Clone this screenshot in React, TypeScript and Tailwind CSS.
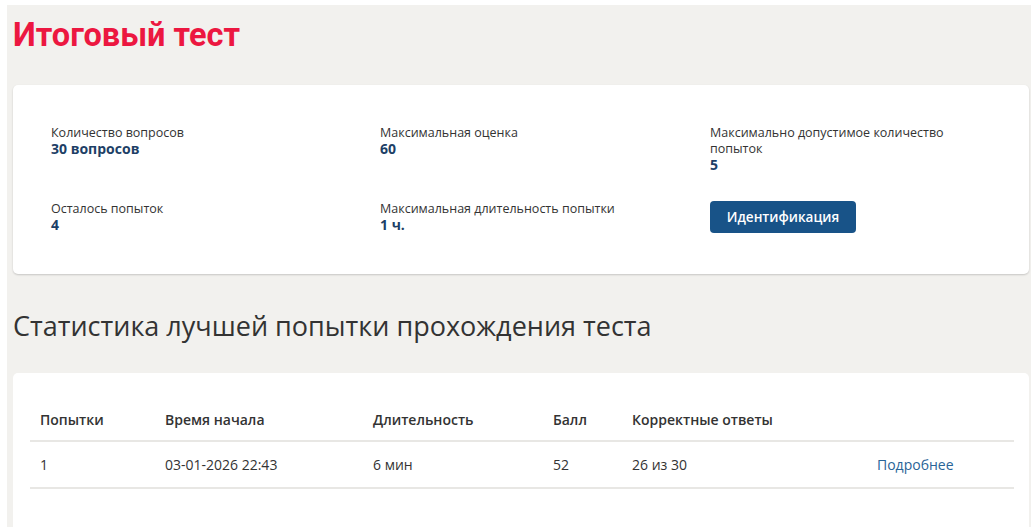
const sans = "font-['Segoe_UI','Open_Sans','Noto_Sans',sans-serif]";

type Info = { label: string; value: string };

function InfoItem({ label, value }: Info) {
  return (
    <div className="flex flex-col">
      <span className="text-[12.5px] leading-4 text-[#333]">{label}</span>
      <span className="text-[14px] leading-4 font-bold text-[#1d3f66]">{value}</span>
    </div>
  );
}

const rows = [
  { attempt: "1", start: "03-01-2026 22:43", duration: "6 мин", score: "52", correct: "26 из 30" },
];

export default function App() {
  return (
    <div className={`min-h-screen bg-white pl-[7px] pt-[5px] ${sans}`}>
      <div className="min-h-[522px] bg-[#f2f1ee] pl-[6px] pr-[2px]">
        <h1 className="pt-[10px] text-[32.5px] leading-[40px] font-bold text-[#ec1740] font-['Roboto',sans-serif]">
          Итоговый тест
        </h1>

        <section className="mt-[30px] rounded-[5px] bg-white pb-[41px] pl-[38px] pt-[40px] shadow-[0_1px_2px_rgba(0,0,0,0.18)]">
          <div className="grid grid-cols-[329px_330px_1fr] gap-y-[28px]">
            <InfoItem label="Количество вопросов" value="30 вопросов" />
            <InfoItem label="Максимальная оценка" value="60" />
            <div className="flex flex-col">
              <span className="w-[250px] text-[12.5px] leading-4 text-[#333]">
                Максимально допустимое количество попыток
              </span>
              <span className="text-[14px] leading-4 font-bold text-[#1d3f66]">5</span>
            </div>
            <InfoItem label="Осталось попыток" value="4" />
            <InfoItem label="Максимальная длительность попытки" value="1 ч." />
            <div>
              <button
                type="button"
                className="h-[32px] w-[146px] rounded-[4px] bg-[#185388] text-[13.5px] font-semibold text-white"
              >
                Идентификация
              </button>
            </div>
          </div>
        </section>

        <h2 className="mt-[34px] text-[27px] leading-[36px] font-normal text-[#333]">
          Статистика лучшей попытки прохождения теста
        </h2>

        <section className="mt-[29px] rounded-t-[5px] bg-white pl-[17px] pr-[15px] pt-[34px] pb-[60px]">
          <table className="w-full border-collapse text-left text-[14px] text-[#333]">
            <thead>
              <tr className="border-b-2 border-[#e8e7e4]">
                <th className="w-[125px] px-[10px] pb-[10px] pt-[2px] font-semibold">Попытки</th>
                <th className="w-[208px] px-[10px] pb-[10px] pt-[2px] font-semibold">Время начала</th>
                <th className="w-[180px] px-[10px] pb-[10px] pt-[2px] font-semibold">Длительность</th>
                <th className="w-[79px] px-[10px] pb-[10px] pt-[2px] font-semibold">Балл</th>
                <th className="w-[245px] px-[10px] pb-[10px] pt-[2px] font-semibold">Корректные ответы</th>
                <th className="px-[10px] pb-[10px] pt-[2px]"></th>
              </tr>
            </thead>
            <tbody>
              {rows.map((r) => (
                <tr key={r.attempt} className="border-b-2 border-[#e8e7e4]">
                  <td className="px-[10px] py-[12px]">{r.attempt}</td>
                  <td className="px-[10px] py-[12px]">{r.start}</td>
                  <td className="px-[10px] py-[12px]">{r.duration}</td>
                  <td className="px-[10px] py-[12px]">{r.score}</td>
                  <td className="px-[10px] py-[12px]">{r.correct}</td>
                  <td className="px-[10px] py-[12px]">
                    <a href="#" className="text-[#2a6497]">Подробнее</a>
                  </td>
                </tr>
              ))}
            </tbody>
          </table>
        </section>
      </div>
    </div>
  );
}
